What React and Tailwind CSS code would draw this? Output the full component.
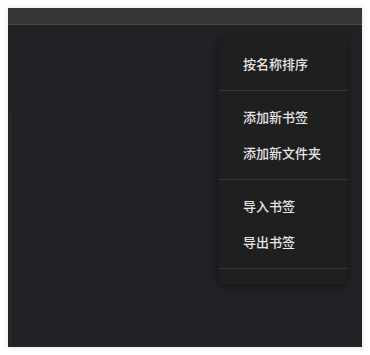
export default function App() {
  const font = { fontFamily: '"Noto Sans CJK SC", "Noto Sans", sans-serif' };
  const Item = ({ children }) => (
    <div className="h-9 flex items-center pl-6 text-[13px] font-medium text-[#e6e6e6]">{children}</div>
  );
  const Sep = () => <div className="h-px bg-[#3a3a3a] my-2" />;
  return (
    <div className="w-[370px] h-[355px] bg-white p-2" style={font}>
      <div className="w-[354px] h-[339px] flex flex-col bg-[#212226] shadow-[0_0_6px_rgba(0,0,0,0.12)] relative overflow-hidden">
        <div className="h-[17px] bg-[#353535] border-b border-[#4a4a4a] shrink-0" />
        <div className="flex-1 relative">
          <div className="absolute left-[2px] top-[85px] bottom-0 w-px bg-[#2a2b2f]" />
          <div className="absolute left-[211px] top-[12px] w-[128px] bg-[#1f1f1f] rounded-[5px] shadow-[0_2px_8px_rgba(0,0,0,0.45)] pt-[9px] pb-[7px]">
            <Item>按名称排序</Item>
            <Sep />
            <Item>添加新书签</Item>
            <Item>添加新文件夹</Item>
            <Sep />
            <Item>导入书签</Item>
            <Item>导出书签</Item>
            <Sep />
          </div>
        </div>
      </div>
    </div>
  );
}
